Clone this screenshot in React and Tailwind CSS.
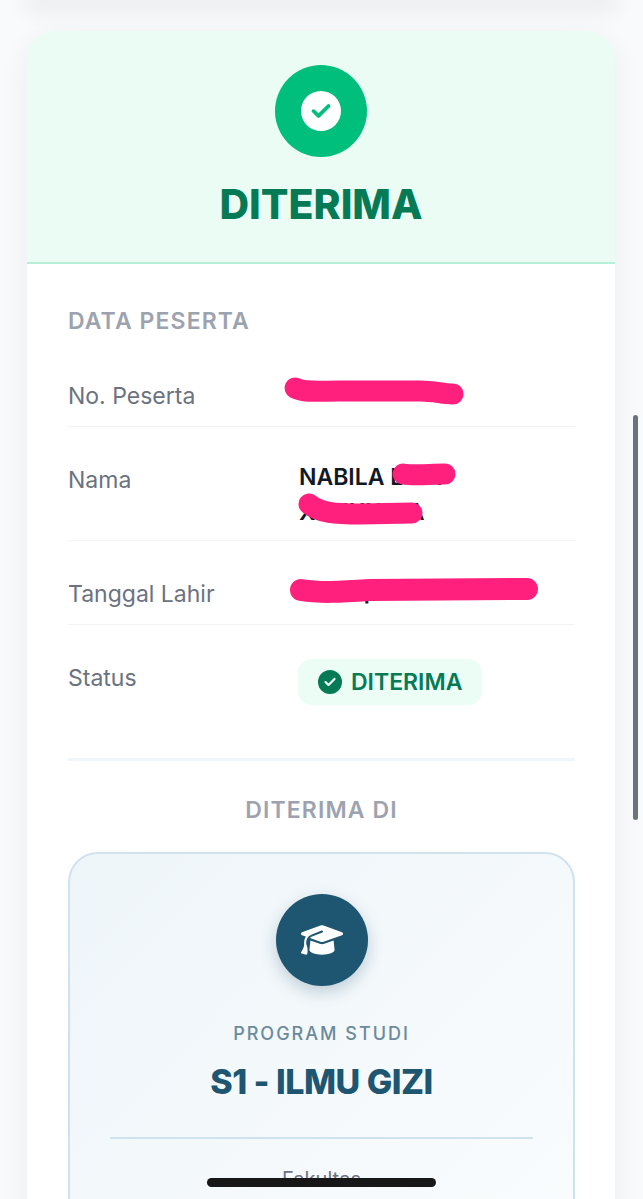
import React from 'react';
import { FaCircleCheck, FaGraduationCap } from 'react-icons/fa6';

function Row({ label, children }) {
    return (
        <div className="grid grid-cols-[231px_1fr] items-start pt-[33px] pb-[10px] border-b border-[#f1f3f5]">
            <div className="mt-[1px] text-[23px] leading-[39px] text-[#6b7280]">{label}</div>
            <div className="text-[23px] leading-[35px] font-semibold text-[#111827]">{children}</div>
        </div>
    );
}

export default function App() {
    return (
        <div className="relative h-[1199px] overflow-hidden bg-[#f9fafb] font-['Inter',sans-serif]">
            {/* ujung kartu di atas */}
            <div className="mx-[32px] h-0 shadow-[0_2px_22px_8px_rgba(0,0,0,0.07)]"></div>

            <div className="ml-[27px] mr-[28px] mt-[31px] overflow-hidden rounded-t-[28px] bg-white shadow-[0_6px_30px_rgba(0,0,0,0.06)]">
                <div className="flex flex-col items-center h-[233px] pt-[34px] bg-[#eafcf4] border-b-2 border-[#b5efd8]">
                    <div className="flex items-center justify-center w-[92px] h-[92px] rounded-full bg-[#00bf7d]">
                        <FaCircleCheck className="text-white text-[40px]" />
                    </div>
                    <h1 className="mt-[23px] text-[41px] leading-[48px] font-extrabold text-[#057a55]">DITERIMA</h1>
                </div>

                <div className="pl-[41px] pr-[40px] pt-[43px] h-[1000px]">
                    <h2 className="mb-[8px] text-[23px] leading-[28px] font-semibold tracking-[1.1px] text-[#9ca3af]">DATA PESERTA</h2>

                    <Row label="No. Peserta">0000000000</Row>
                    <Row label="Nama">
                        <div className="w-[200px]">NABILA L XX XXXXXLLA</div>
                    </Row>
                    <Row label="Tanggal Lahir">00 Sep</Row>

                    <div className="grid grid-cols-[231px_1fr] items-start pt-[33px]">
                        <div className="mt-[1px] text-[23px] leading-[39px] text-[#6b7280]">Status</div>
                        <div className="inline-flex items-center self-start justify-self-start gap-[9px] mt-[1px] -ml-[1px] h-[46px] px-[20px] rounded-[14px] bg-[#ecfdf5] text-[23px] font-semibold text-[#057a55]">
                            <FaCircleCheck className="text-[24px]" />
                            DITERIMA
                        </div>
                    </div>

                    <div className="mt-[53px] h-[3px] bg-[#eff5f9]"></div>

                    <h2 className="mt-[35px] text-center text-[23px] leading-[28px] font-semibold tracking-[1.1px] text-[#9ca3af]">DITERIMA DI</h2>

                    <div className="mt-[28px] flex flex-col items-center px-[40px] pt-[40px] h-[500px] rounded-[30px] border-2 border-[#cfe2ed] bg-gradient-to-br from-[#eef5f9] to-[#fbfdfe]">
                        <div className="flex items-center justify-center w-[92px] h-[92px] rounded-full bg-[#1e5570] shadow-[0_6px_16px_rgba(30,85,112,0.25)]">
                            <FaGraduationCap className="text-white text-[42px]" />
                        </div>
                        <div className="mt-[36px] text-[18px] leading-[24px] font-medium tracking-[2px] text-[#6b8a9c]">PROGRAM STUDI</div>
                        <div className="mt-[14px] text-[34px] leading-[44px] font-extrabold tracking-[-0.5px] text-[#1e5570]">S1 - ILMU GIZI</div>
                        <div className="mt-[33px] w-full h-[2px] bg-[#cfe2ed]"></div>
                        <div className="mt-[26px] text-[20px] leading-[28px] text-[#6b7280]">Fakultas</div>
                    </div>
                </div>
            </div>

            {/* coretan sensor di atas data */}
            <svg className="absolute inset-0 pointer-events-none" width="643" height="1199" fill="none" stroke="#ff1f7d" strokeLinecap="round">
                <path d="M295 388 C305 393 320 391 340 391 L420 391 C435 391 442 394 453 394" strokeWidth="21" />
                <path d="M403 474 C415 476 430 474 445 474" strokeWidth="21" />
                <path d="M309 504 C320 513 335 514 360 514 L412 513" strokeWidth="21" />
                <path d="M301 590 C320 593 340 592 370 590 L527 589" strokeWidth="22" />
            </svg>

            {/* scrollbar */}
            <div className="absolute left-[633px] top-[415px] w-[5px] h-[405px] rounded-full bg-[#6b7280]"></div>
            {/* home indicator */}
            <div className="absolute left-[207px] top-[1178px] w-[229px] h-[9px] rounded-full bg-[#171717]"></div>
        </div>
    );
}
